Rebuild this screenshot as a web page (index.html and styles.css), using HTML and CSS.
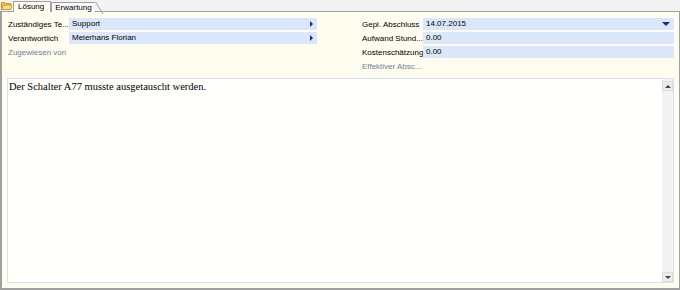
FILE: index.html
```html
<!DOCTYPE html>
<html lang="de">
<head>
    <meta charset="UTF-8">
    <title>Lösung</title>
    <link rel="stylesheet" href="styles.css">
</head>
<body>
    <div class="tabs">
        <svg class="folder" width="11" height="9" viewBox="0 0 11 9">
            <path d="M0.5 1.5h3l1 1h5v6h-9z" fill="#f3c35a" stroke="#c8952a"/>
            <path d="M0.5 8.5l2-4.5h8.5l-1.5 4.5z" fill="#fbe08c" stroke="#c8952a" stroke-linejoin="round"/>
        </svg>
        <div class="tab active">Lösung</div>
        <div class="tab">Erwartung</div>
    </div>
    <div class="panel">
        <div class="form">
            <div class="col">
                <div class="row">
                    <span class="label">Zuständiges Te...</span>
                    <div class="field">Support<span class="arrow-right"></span></div>
                </div>
                <div class="row">
                    <span class="label">Verantwortlich</span>
                    <div class="field">Meierhans Florian<span class="arrow-right"></span></div>
                </div>
                <div class="row">
                    <span class="label muted">Zugewiesen von</span>
                </div>
            </div>
            <div class="col">
                <div class="row">
                    <span class="label">Gepl. Abschluss</span>
                    <div class="field">14.07.2015<span class="arrow-down"></span></div>
                </div>
                <div class="row">
                    <span class="label">Aufwand Stund...</span>
                    <div class="field">0.00</div>
                </div>
                <div class="row">
                    <span class="label">Kostenschätzung</span>
                    <div class="field">0.00</div>
                </div>
                <div class="row">
                    <span class="label muted">Effektiver Absc...</span>
                </div>
            </div>
        </div>
        <div class="memo">
            <div class="memo-text">Der Schalter A77 musste ausgetauscht werden.</div>
            <div class="scrollbar">
                <div class="sb-btn"><span class="sb-up"></span></div>
                <div class="sb-btn"><span class="sb-down"></span></div>
            </div>
        </div>
    </div>
</body>
</html>
```

FILE: styles.css
```css
html, body {
    margin: 0;
    height: 100%;
}
body {
    background: #f3f3f3;
    font-family: "Liberation Sans", Arial, sans-serif;
    font-size: 8px;
    color: #000;
    display: flex;
    flex-direction: column;
}
.tabs {
    display: flex;
    align-items: flex-end;
    height: 11px;
    padding-left: 1px;
    position: relative;
}
.folder {
    margin-bottom: 1px;
}
.tab {
    position: relative;
    height: 10px;
    line-height: 10px;
    padding: 0 5px 0 3px;
    border: 1px solid #a0a0a0;
    border-bottom: none;
    margin-bottom: -1px;
    background: #fbfbfb;
    box-sizing: border-box;
    border-radius: 1px 1px 0 0;
}
.tab.active {
    background: #fffdf0;
    height: 11px;
    z-index: 2;
    margin-left: 1px;
    padding: 0 6px 0 4px;
}
.tab + .tab {
    padding-right: 3px;
    border-right: none;
    border-radius: 1px 0 0 0;
}
.tab + .tab::after {
    content: "";
    position: absolute;
    right: -1px;
    top: -1px;
    width: 1px;
    height: 12px;
    background: #a0a0a0;
    transform: skewX(32deg);
    transform-origin: top;
}
.panel {
    flex: 1;
    background: #fffdf0;
    border: 1px solid #a0a0a0;
    border-left-width: 2px;
    border-bottom-width: 2px;
    padding: 6px 5px 5px 5px;
    display: flex;
    flex-direction: column;
    gap: 6px;
}
.form {
    display: flex;
    gap: 45px;
    margin-left: 1px;
}
.col {
    display: flex;
    flex-direction: column;
    gap: 2px;
}
.col:first-child {
    width: 309px;
}
.col:last-child {
    flex: 1;
}
.row {
    display: flex;
    height: 12px;
    align-items: center;
}
.label {
    width: 61px;
    flex: none;
    white-space: nowrap;
    overflow: hidden;
}
.muted {
    color: #6f7f96;
}
.field {
    flex: 1;
    height: 12px;
    line-height: 12px;
    background: #dbe8fb;
    padding-left: 3px;
    position: relative;
}
.arrow-right {
    position: absolute;
    right: 4px;
    top: 3px;
    border-left: 3px solid #1c2a84;
    border-top: 3px solid transparent;
    border-bottom: 3px solid transparent;
}
.arrow-down {
    position: absolute;
    right: 4px;
    top: 4px;
    border-top: 4px solid #1c2a84;
    border-left: 4px solid transparent;
    border-right: 4px solid transparent;
}
.memo {
    flex: 1;
    display: flex;
    background: #fffffc;
    border: 1px solid #d5e1f4;
}
.memo-text {
    flex: 1;
    font-family: "Liberation Serif", "Times New Roman", serif;
    font-size: 10.5px;
    padding: 2px 1px;
}
.scrollbar {
    width: 11px;
    background: #f3f3f3;
    display: flex;
    flex-direction: column;
    justify-content: space-between;
    padding: 2px 0 0 0;
}
.sb-btn {
    height: 10px;
    background: #ececec;
    border: 1px solid #dcdcdc;
    box-sizing: border-box;
    display: flex;
    align-items: center;
    justify-content: center;
}
.sb-up {
    border-bottom: 3px solid #444;
    border-left: 3px solid transparent;
    border-right: 3px solid transparent;
}
.sb-down {
    border-top: 3px solid #444;
    border-left: 3px solid transparent;
    border-right: 3px solid transparent;
}
```
